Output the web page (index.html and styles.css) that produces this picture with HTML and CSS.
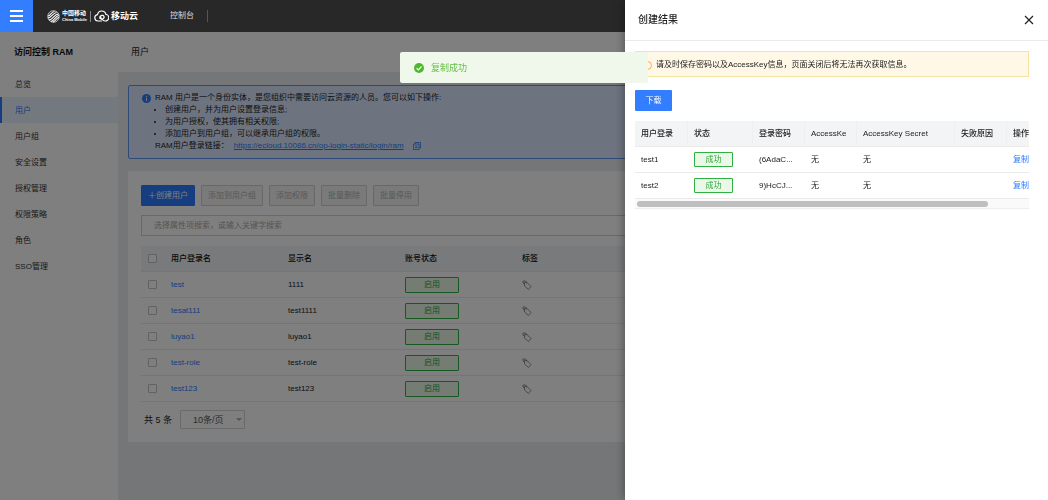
FILE: index.html
```html
<!DOCTYPE html>
<html lang="zh-CN">
<head>
<meta charset="utf-8">
<title>访问控制 RAM</title>
<link rel="stylesheet" href="styles.css">
</head>
<body>
<svg class="symbols" aria-hidden="true">
  <symbol id="tag" viewBox="0 0 20 20"><path d="M5 9V5h5l8 8-5 6-8-7zM8 8h1M5 9L2 6V2h5l3 3" fill="none" stroke="currentColor" stroke-width="1.600"/></symbol>
</svg>
<header class="topbar">
  <button class="menu-button" type="button" aria-label="菜单"><span></span><span></span><span></span></button>
  <div class="brand">
    <svg class="mobile-logo" viewBox="0 0 26 26" fill="none" stroke="#fff" stroke-width="2.200"><circle cx="13" cy="13" r="11.500" stroke-width="1.400"/><path d="M2 12c5 0 7-9 13-9M2 16C9 16 11 6 19 5M4 20c8 0 10-12 19-12M8 23c7-1 9-12 16-12M12 24c6-2 7-9 12-9"/></svg>
    <span class="brand-name"><strong>中国移动</strong><small>China Mobile</small></span>
    <span class="brand-line"></span>
    <svg class="cloud-logo" viewBox="0 0 30 24" fill="none" stroke="#fff" stroke-width="2.400" stroke-linecap="round"><path d="M15 22H8a6.500 6.500 0 0 1-1-12.900C8 5 11 2 15 2c5 0 8 3 8.500 6.500A6.500 6.500 0 0 1 22 22c-5 0-7-5-10-9M12 17c-2-5 6-9 8-4 1 4-4 7-7 4"/></svg>
    <span class="cloud-name">移动云</span>
  </div>
  <a class="console-link" href="#">控制台</a>
</header>
<div class="layout">
  <aside class="sidebar">
    <h2>访问控制 RAM</h2>
    <nav>
      <a href="#">总览</a>
      <a href="#" class="active">用户</a>
      <a href="#">用户组</a>
      <a href="#">安全设置</a>
      <a href="#">授权管理</a>
      <a href="#">权限策略</a>
      <a href="#">角色</a>
      <a href="#">SSO管理</a>
    </nav>
  </aside>
  <main>
    <h1>用户</h1>
    <div class="content">
      <section class="info">
        <svg class="info-icon" viewBox="0 0 10 10"><circle cx="5" cy="5" r="5" fill="#2b7bff"/><path d="M5 4.200v3.600M5 2.200v1.100" stroke="#fff"/></svg>
        <div>
          <p>RAM 用户是一个身份实体，是您组织中需要访问云资源的人员。您可以如下操作:</p>
          <ul>
            <li>创建用户，并为用户设置登录信息;</li>
            <li>为用户授权，使其拥有相关权限;</li>
            <li>添加用户到用户组，可以继承用户组的权限。</li>
          </ul>
          <p class="login-line">RAM用户登录链接： <a href="#">https://ecloud.10086.cn/op-login-static/login/ram</a>
            <button class="copy" type="button" aria-label="复制链接"><svg viewBox="0 0 16 16" fill="none" stroke="currentColor" stroke-width="1.600"><path d="M4 4V1h11v11h-3"/><path d="M1 4h11v11H1zM4 8h5M4 11h5"/></svg></button></p>
        </div>
      </section>
      <section class="card">
        <div class="toolbar">
          <button class="primary" type="button">＋创建用户</button>
          <button type="button" disabled>添加到用户组</button>
          <button type="button" disabled>添加权限</button>
          <button type="button" disabled>批量删除</button>
          <button type="button" disabled>批量停用</button>
        </div>
        <input class="search" type="text" aria-label="搜索" placeholder="选择属性项搜索，或输入关键字搜索">
        <table class="users">
          <thead><tr><th class="check"><input type="checkbox" aria-label="全选"></th><th class="col">用户登录名</th><th class="col">显示名</th><th class="col">账号状态</th><th>标签</th></tr></thead>
          <tbody>
            <tr><td><input type="checkbox" aria-label="test"></td><td><a href="#">test</a></td><td>1111</td><td><span class="status">启用</span></td><td><svg class="tag"><use href="#tag"/></svg></td></tr>
            <tr><td><input type="checkbox" aria-label="tesat111"></td><td><a href="#">tesat111</a></td><td>test1111</td><td><span class="status">启用</span></td><td><svg class="tag"><use href="#tag"/></svg></td></tr>
            <tr><td><input type="checkbox" aria-label="luyao1"></td><td><a href="#">luyao1</a></td><td>luyao1</td><td><span class="status">启用</span></td><td><svg class="tag"><use href="#tag"/></svg></td></tr>
            <tr><td><input type="checkbox" aria-label="test-role"></td><td><a href="#">test-role</a></td><td>test-role</td><td><span class="status">启用</span></td><td><svg class="tag"><use href="#tag"/></svg></td></tr>
            <tr><td><input type="checkbox" aria-label="test123"></td><td><a href="#">test123</a></td><td>test123</td><td><span class="status">启用</span></td><td><svg class="tag"><use href="#tag"/></svg></td></tr>
          </tbody>
        </table>
        <div class="pager"><label for="size">共 5 条</label><span class="select-wrap"><select id="size"><option>10条/页</option></select></span></div>
      </section>
    </div>
  </main>
</div>
<div class="mask"></div>
<aside class="drawer" role="dialog" aria-labelledby="result-title">
  <header class="drawer-head">
    <h2 id="result-title">创建结果</h2>
    <button type="button" aria-label="关闭"><svg viewBox="0 0 10 10" stroke="#222" stroke-width="1.200"><path d="M1 1l8 8M9 1l-8 8"/></svg></button>
  </header>
  <div class="drawer-body">
    <div class="warning"><svg viewBox="0 0 10 10" fill="none" stroke="#f5a04c"><circle cx="5" cy="5" r="4.400"/><path d="M5 2.500v3M5 6.500v1"/></svg>请及时保存密码以及AccessKey信息，页面关闭后将无法再次获取信息。</div>
    <button class="download" type="button">下载</button>
    <div class="result-scroll">
      <table class="results">
        <colgroup><col class="w-first"><col class="w-m"><col class="w-s"><col class="w-s"><col class="w-l"><col class="w-s"><col></colgroup>
        <thead><tr><th>用户登录</th><th>状态</th><th>登录密码</th><th>AccessKe</th><th>AccessKey Secret</th><th>失败原因</th><th>操作</th></tr></thead>
        <tbody>
          <tr><td>test1</td><td><span class="status success">成功</span></td><td>(6AdaC...</td><td>无</td><td>无</td><td></td><td><a href="#">复制</a></td></tr>
          <tr><td>test2</td><td><span class="status success">成功</span></td><td>9)HcCJ...</td><td>无</td><td>无</td><td></td><td><a href="#">复制</a></td></tr>
        </tbody>
      </table>
      <div class="track"><div class="thumb"></div></div>
    </div>
  </div>
</aside>
<div class="toast" role="status"><svg viewBox="0 0 10 10"><circle cx="5" cy="5" r="5" fill="#4db82e"/><path d="M2.600 5.200l1.700 1.700 3.200-3.400" fill="none" stroke="#fff" stroke-width="1.200"/></svg>复制成功</div>
</body>
</html>
```
FILE: styles.css
```css
* { box-sizing: border-box; }
body {
  margin: 0;
  min-height: 100vh;
  display: flex;
  flex-direction: column;
  overflow: hidden;
  font: 8px/12px "Liberation Sans", "Noto Sans CJK SC", sans-serif;
  color: #222;
  background: #ebedf0;
}
button, input, select { font: inherit; color: inherit; margin: 0; }
button { cursor: pointer; }
h1, h2, p, ul { margin: 0; padding: 0; }
a { color: #2b7bff; text-decoration: none; }
.symbols { position: absolute; width: 0; height: 0; }

.topbar {
  position: relative;
  z-index: 2;
  height: 32px;
  display: flex;
  align-items: center;
  background: #282828;
  color: #fff;
}
.menu-button {
  width: 33px;
  height: 32px;
  padding: 0 10px;
  border: 0;
  background: #337dff;
  display: flex;
  flex-direction: column;
  justify-content: center;
  gap: 3px;
}
.menu-button span { height: 2px; background: #fff; }
.brand { display: flex; align-items: center; margin-left: 14px; width: 109px; }
.mobile-logo { width: 13px; height: 13px; margin-right: 2px; }
.brand-name { display: flex; flex-direction: column; white-space: nowrap; }
.brand-name strong { font-size: 6px; line-height: 7px; }
.brand-name small { font-size: 4px; line-height: 5px; font-weight: bold; }
.brand-line { width: 1px; height: 11px; margin: 0 3px; background: #888; }
.cloud-logo { width: 15px; height: 12px; margin-right: 2px; }
.cloud-name { font-size: 9px; font-weight: bold; white-space: nowrap; }
.console-link {
  color: #ddd;
  margin-left: 14px;
  padding-right: 13px;
  border-right: 1px solid #555;
}

.layout { flex: 1; display: flex; }
.sidebar { width: 118px; flex: none; background: #fff; }
.sidebar h2 { padding: 13px 14px; height: 39px; font-size: 9px; line-height: 14px; color: #111; }
.sidebar nav { display: flex; flex-direction: column; }
.sidebar nav a {
  padding: 8px 13px 6px;
  border-left: 2px solid transparent;
  color: #333;
}
.sidebar nav .active { border-color: #2b7bff; background: #e8f1ff; color: #2b7bff; }

main { flex: 1; min-width: 0; }
h1 { height: 40px; padding: 0 13px; background: #fff; font-size: 9px; line-height: 41px; font-weight: normal; }
.content { padding: 13px 10px; display: flex; flex-direction: column; gap: 12px; }
.info {
  display: flex;
  gap: 4px;
  padding: 6px 13px;
  border: 1px solid #5c95f5;
  border-radius: 2px;
  background: #dce9ff;
}
.info-icon { width: 9px; height: 9px; margin-top: 2px; }
.info ul { padding-left: 10px; }
.login-line { display: flex; gap: 5px; }
.login-line a { text-decoration: underline; }
.copy { width: 8px; height: 12px; margin-left: 4px; padding: 0; border: 0; background: none; color: #2b7bff; }
.copy svg { display: block; width: 8px; height: 8px; }

.card { padding: 14px 13px 13px; background: #fff; }
.toolbar { display: flex; gap: 6px; margin-bottom: 9px; }
.toolbar button {
  height: 21px;
  padding: 0 6px;
  border: 1px solid #d0d0d0;
  border-radius: 1px;
  background: #f5f5f5;
  color: #b0b0b0;
}
.toolbar .primary { border-color: #2b7bff; background: #2b7bff; color: #fff; }
.search {
  display: block;
  width: 100%;
  height: 21px;
  padding: 0 12px;
  border: 1px solid #d0d0d0;
  background: #fff;
}
.search::placeholder { color: #aaa; opacity: 1; }
table { width: 100%; border-collapse: separate; border-spacing: 0; table-layout: fixed; }
th, td { height: 26px; padding: 0 6px; text-align: left; font-weight: normal; white-space: nowrap; border-bottom: 1px solid #ebebeb; }
th { background: #f3f4f6; font-weight: 500; }
.users { margin-top: 10px; }
.users th { color: #111; }
.users .check { width: 24px; }
.users .col { width: 117px; }
.users input {
  appearance: none;
  display: block;
  width: 9px;
  height: 9px;
  margin-left: 1px;
  border: 1px solid #c4c4c4;
  border-radius: 1px;
  background: #fff;
}
.status {
  display: block;
  width: 54px;
  height: 16px;
  line-height: 14px;
  text-align: center;
  color: #2aa83c;
  border: 1px solid #2eb043;
  border-radius: 1px;
  background: #ebf8e8;
}
.tag { display: block; width: 10px; height: 10px; color: #777; }
.pager { display: flex; align-items: center; gap: 8px; margin: 8px 3px 0; font-size: 9px; }
.select-wrap { display: flex; align-items: center; width: 65px; height: 19px; border: 1px solid #d4d4d4; border-radius: 1px; }
.select-wrap select { flex: 1; appearance: none; border: 0; background: none; padding: 0 12px; color: #555; }
.select-wrap::after { content: ""; margin-right: 5px; border: 3px solid transparent; border-top-color: #aaa; border-bottom: 0; }

.mask { position: fixed; inset: 32px 0 0; z-index: 1; background: rgba(0, 0, 0, .5); }

.drawer {
  position: fixed;
  z-index: 3;
  top: 0;
  right: 0;
  bottom: 0;
  width: 423px;
  max-width: 100%;
  background: #fff;
  box-shadow: 0 0 10px rgba(0, 0, 0, .4);
}
.drawer-head {
  display: flex;
  align-items: center;
  justify-content: space-between;
  height: 41px;
  padding: 0 14px 1px 13px;
  border-bottom: 1px solid #ebebeb;
}
.drawer-head h2 { font-size: 10px; font-weight: 500; color: #222; }
.drawer-head button { width: 10px; height: 10px; padding: 0; border: 0; background: none; }
.drawer-head svg { display: block; }
.drawer-body { padding: 10px 19px 0 10px; }
.warning {
  display: flex;
  align-items: center;
  gap: 4px;
  height: 26px;
  padding: 2px 7px 0;
  border: 1px solid #f7e3a1;
  background: #fff8e6;
}
.warning svg { width: 9px; height: 9px; }
.download { display: block; margin: 13px 0 10px; width: 37px; height: 21px; padding: 0; border: 0; border-radius: 1px; background: #337dff; color: #fff; }
.result-scroll { overflow: hidden; }
.results { width: 441px; }
.results th { border-right: 1px solid #eeeff1; }
.w-first { width: 53px; }
.w-s { width: 52px; }
.w-m { width: 65px; }
.w-l { width: 98px; }
.status.success { width: 39px; height: 15px; line-height: 13px; }
.track { height: 10px; padding: 2px; background: #fafafa; border-bottom: 1px solid #eee; }
.thumb { width: 90%; height: 6px; border-radius: 3px; background: #bfbfbf; }

.toast {
  position: fixed;
  z-index: 4;
  top: 52px;
  left: 50%;
  transform: translateX(-50%);
  display: flex;
  align-items: center;
  gap: 7px;
  width: 248px;
  height: 31px;
  padding: 0 14px;
  border-radius: 2px;
  background: #eff8eb;
  color: #67c04b;
  font-size: 9px;
}
.toast svg { width: 10px; height: 10px; }
```
